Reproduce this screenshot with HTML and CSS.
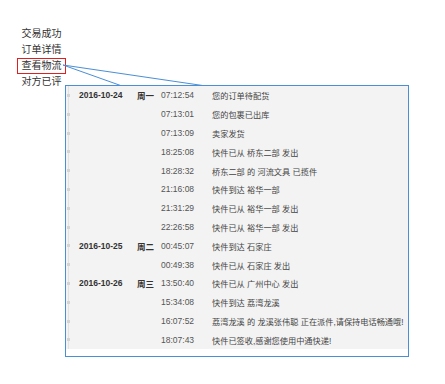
FILE: index.html
```html
<!DOCTYPE html>
<html lang="zh-CN">
  <head>
    <meta charset="UTF-8" />
    <title>查看物流</title>
    <link rel="stylesheet" href="styles.css">
  </head>

  <body>
    <div class="page">
      <ul class="menu">
        <li class="menu-item">交易成功</li>
        <li class="menu-item">订单详情</li>
        <li class="menu-item active">查看物流</li>
        <li class="menu-item">对方已评</li>
      </ul>

      <svg class="pointer" width="445" height="100" viewBox="0 0 445 100">
        <line x1="63" y1="65" x2="122" y2="86" />
        <line x1="63" y1="65" x2="206" y2="86" />
      </svg>

      <div class="track">
        <div class="track-list">
          <div class="row"><span class="dot"></span><span class="date">2016-10-24</span><span class="week">周一</span><span class="time">07:12:54</span><span class="desc">您的订单待配货</span></div>
          <div class="row"><span class="dot"></span><span class="date"></span><span class="week"></span><span class="time">07:13:01</span><span class="desc">您的包裹已出库</span></div>
          <div class="row"><span class="dot"></span><span class="date"></span><span class="week"></span><span class="time">07:13:09</span><span class="desc">卖家发货</span></div>
          <div class="row"><span class="dot"></span><span class="date"></span><span class="week"></span><span class="time">18:25:08</span><span class="desc">快件已从 桥东二部 发出</span></div>
          <div class="row"><span class="dot"></span><span class="date"></span><span class="week"></span><span class="time">18:28:32</span><span class="desc">桥东二部 的 河流文具 已揽件</span></div>
          <div class="row"><span class="dot"></span><span class="date"></span><span class="week"></span><span class="time">21:16:08</span><span class="desc">快件到达 裕华一部</span></div>
          <div class="row"><span class="dot"></span><span class="date"></span><span class="week"></span><span class="time">21:31:29</span><span class="desc">快件已从 裕华一部 发出</span></div>
          <div class="row"><span class="dot"></span><span class="date"></span><span class="week"></span><span class="time">22:26:58</span><span class="desc">快件已从 裕华一部 发出</span></div>
          <div class="row"><span class="dot"></span><span class="date">2016-10-25</span><span class="week">周二</span><span class="time">00:45:07</span><span class="desc">快件到达 石家庄</span></div>
          <div class="row"><span class="dot"></span><span class="date"></span><span class="week"></span><span class="time">00:49:38</span><span class="desc">快件已从 石家庄 发出</span></div>
          <div class="row"><span class="dot"></span><span class="date">2016-10-26</span><span class="week">周三</span><span class="time">13:50:40</span><span class="desc">快件已从 广州中心 发出</span></div>
          <div class="row"><span class="dot"></span><span class="date"></span><span class="week"></span><span class="time">15:34:08</span><span class="desc">快件到达 荔湾龙溪</span></div>
          <div class="row"><span class="dot"></span><span class="date"></span><span class="week"></span><span class="time">16:07:52</span><span class="desc">荔湾龙溪 的 龙溪张伟聪 正在派件,请保持电话畅通哦!</span></div>
          <div class="row"><span class="dot"></span><span class="date"></span><span class="week"></span><span class="time">18:07:43</span><span class="desc">快件已签收,感谢您使用中通快递!</span></div>
        </div>
      </div>
    </div>
  </body>
</html>
```

FILE: styles.css
```css
* {
  margin: 0;
  padding: 0;
  box-sizing: border-box;
}
body {
  font-family: "Liberation Sans", "Noto Sans CJK SC", sans-serif;
  background-color: #ffffff;
  color: #333333;
}
.page {
  position: relative;
  width: 445px;
  height: 384px;
  padding: 26px 0 0 17px;
}

/* left menu */
.menu {
  list-style: none;
  height: 59px;
}
.menu-item {
  width: fit-content;
  font-size: 10px;
  line-height: 13px;
  padding: 0 3.5px 1px 3.5px;
  border: 1px solid transparent;
  color: #333333;
}
.menu-item.active {
  border: 1.5px solid #e02020;
}

/* pointer lines */
.pointer {
  position: absolute;
  left: 0;
  top: 0;
}
.pointer line {
  stroke: #4a8ed6;
  stroke-width: 1;
}

/* tracking panel */
.track {
  position: relative;
  margin-left: 48px;
  width: 344px;
  border: 1px solid #4a8ed6;
  background-color: #ffffff;
  padding-bottom: 7px;
}
.track-list {
  background-color: #f3f3f3;
  background-image: linear-gradient(#e2e2e2, #e2e2e2);
  background-size: 1px 100%;
  background-position: 2px 0;
  background-repeat: no-repeat;
}
.row {
  display: flex;
  align-items: center;
  height: 18.8px;
  font-size: 8.5px;
}
.dot {
  width: 13px;
  flex-shrink: 0;
  position: relative;
  height: 100%;
}
.dot::after {
  content: "";
  position: absolute;
  left: 1px;
  top: 8px;
  width: 3px;
  height: 3px;
  background-color: #d4d4d4;
}
.date {
  width: 58px;
  font-weight: bold;
  color: #333333;
}
.week {
  width: 24px;
  font-weight: bold;
  color: #333333;
}
.time {
  width: 51px;
  color: #555555;
}
.desc {
  font-size: 8.2px;
  color: #444444;
  white-space: nowrap;
}
```
